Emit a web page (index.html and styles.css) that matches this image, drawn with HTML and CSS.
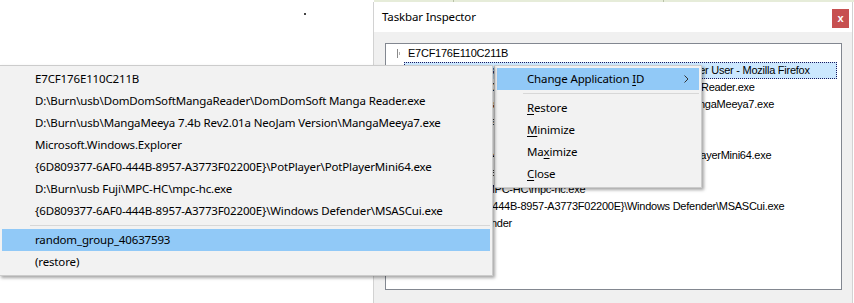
FILE: index.html
```html
<!DOCTYPE html>
<html>
<head>
<meta charset="utf-8">
<title>Taskbar Inspector</title>
<link rel="stylesheet" href="styles.css">
</head>
<body>
<div class="desktop">
  <div class="bgstrip"><span class="bgline l1"></span><span class="bgline l2"></span></div>
  <span class="dot"></span>

  <div class="window">
    <div class="titlebar">
      <span class="title">Taskbar Inspector</span>
      <span class="close">x</span>
    </div>
    <div class="client">
      <div class="tree">
        <div class="row root"><svg class="twig" width="22" height="17" viewBox="0 0 22 17"><line x1="11.5" y1="4" x2="11.5" y2="13" stroke="#8a8a8a" stroke-width="1"/><rect x="13" y="7" width="1" height="3" fill="#b0b0b0"/></svg><span class="label">E7CF176E110C211B</span></div>
        <div class="row child sel"><span class="label">RaMMicHaeL's Blog - 7+ Taskbar Tweaker v5.6 for the Power User - Mozilla Firefox</span></div>
        <div class="row root"><span class="twig-space"></span><span class="label">D:\Burn\usb\DomDomSoftMangaReader\DomDomSoft Manga Reader.exe</span></div>
        <div class="row root"><span class="twig-space"></span><span class="label">D:\Burn\usb\MangaMeeya 7.4b Rev2.01a NeoJam Version\MangaMeeya7.exe</span></div>
        <div class="row root"><span class="twig-space"></span><span class="label">Microsoft.Windows.Explorer</span></div>
        <div class="row child"><span class="label">This PC</span></div>
        <div class="row root"><span class="twig-space"></span><span class="label">{6D809377-6AF0-444B-8957-A3773F02200E}\PotPlayer\PotPlayerMini64.exe</span></div>
        <div class="row child"><span class="label">Daum PotPlayer</span></div>
        <div class="row root"><span class="twig-space"></span><span class="label">D:\Burn\usb Fuji\MPC-HC\mpc-hc.exe</span></div>
        <div class="row root"><span class="twig-space"></span><span class="label">{6D809377-6AF0-444B-8957-A3773F02200E}\Windows Defender\MSASCui.exe</span></div>
        <div class="row child"><span class="label">Windows Defender</span></div>
      </div>
    </div>
  </div>

  <div class="menu ctxmenu">
    <div class="mi hl"><span>Change Application <u>I</u>D</span><svg class="arrow" width="5" height="8" viewBox="0 0 5 8"><path d="M0.5 0.5 L4 4 L0.5 7.5" fill="none" stroke="#333" stroke-width="1"/></svg></div>
    <div class="sep"></div>
    <div class="mi"><span><u>R</u>estore</span></div>
    <div class="mi"><span><u>M</u>inimize</span></div>
    <div class="mi"><span>Ma<u>x</u>imize</span></div>
    <div class="mi"><span><u>C</u>lose</span></div>
  </div>

  <div class="menu idmenu">
    <div class="mi">E7CF176E110C211B</div>
    <div class="mi">D:\Burn\usb\DomDomSoftMangaReader\DomDomSoft Manga Reader.exe</div>
    <div class="mi">D:\Burn\usb\MangaMeeya 7.4b Rev2.01a NeoJam Version\MangaMeeya7.exe</div>
    <div class="mi">Microsoft.Windows.Explorer</div>
    <div class="mi">{6D809377-6AF0-444B-8957-A3773F02200E}\PotPlayer\PotPlayerMini64.exe</div>
    <div class="mi">D:\Burn\usb Fuji\MPC-HC\mpc-hc.exe</div>
    <div class="mi">{6D809377-6AF0-444B-8957-A3773F02200E}\Windows Defender\MSASCui.exe</div>
    <div class="sep"></div>
    <div class="mi hl">random_group_40637593</div>
    <div class="mi">(restore)</div>
  </div>
</div>
</body>
</html>
```

FILE: styles.css
```css
* { box-sizing: border-box; }
html, body { margin: 0; padding: 0; }
body {
  width: 854px;
  height: 303px;
  overflow: hidden;
  background: #ffffff;
  font-family: "Noto Sans", "Segoe UI", sans-serif;
  font-size: 11.5px;
  letter-spacing: -0.15px;
  color: #000;
}
.desktop {
  position: relative;
  width: 854px;
  height: 303px;
  overflow: hidden;
  background: #fff;
}
.bgstrip {
  position: absolute;
  left: 374px;
  top: 0;
  width: 480px;
  height: 2px;
  background: #e6ecd9;
}
.bgline {
  position: absolute;
  top: 0;
  width: 1px;
  height: 2px;
  background: #b9c2a8;
}
.bgline.l1 { left: 79px; }
.bgline.l2 { left: 289px; }
.dot {
  position: absolute;
  left: 304px;
  top: 13px;
  width: 2px;
  height: 2px;
  background: #444;
}

/* window */
.window {
  position: absolute;
  left: 373px;
  top: 2px;
  width: 480px;
  height: 301px;
  background: #f0f0f0;
  border-left: 1px solid #d2d2d2;
  border-right: 1px solid #d2d2d2;
  display: flex;
  flex-direction: column;
}
.titlebar {
  height: 30px;
  flex: none;
  background: #fff;
  display: flex;
  align-items: flex-start;
  justify-content: space-between;
}
.title {
  padding-left: 8px;
  line-height: 30px;
}
.close {
  margin-top: 7px;
  margin-right: 3px;
  width: 17px;
  height: 19px;
  background: #c75050;
  color: #fff;
  font-family: "Liberation Sans", sans-serif;
  font-weight: bold;
  font-size: 11px;
  letter-spacing: 0;
  line-height: 18px;
  text-align: center;
}
.client {
  flex: 1;
  padding: 11px 0 0 11px;
}
.tree {
  width: 457px;
  height: 247px;
  border: 1px solid #828790;
  background: #fff;
  padding-top: 1px;
  overflow: hidden;
  font-family: "Liberation Sans", Arial, sans-serif;
  font-size: 11px;
  letter-spacing: -0.25px;
}
.row {
  height: 17px;
  line-height: 17px;
  white-space: nowrap;
  display: flex;
  align-items: center;
}
.twig, .twig-space {
  width: 22px;
  height: 17px;
  flex: none;
  display: block;
}
.row.child {
  margin-left: 18px;
  width: 433px;
  padding-left: 19px;
}
.row.sel {
  background: #cce8ff;
  border: 1px dotted #1a1a60;
  padding-left: 18px;
}

/* menus */
.menu {
  position: absolute;
  background: #f2f2f2;
  border: 1px solid #cccccc;
  padding: 2px;
  box-shadow: 2px 2px 3px rgba(0, 0, 0, 0.35);
  white-space: nowrap;
}
.mi {
  height: 22px;
  line-height: 22px;
}
.mi.hl { background: #91c9f7; }
.sep {
  height: 7px;
  display: flex;
  align-items: center;
}
.sep::after {
  content: "";
  display: block;
  flex: 1;
  height: 1px;
  background: #d7d7d7;
}
.idmenu {
  left: -1px;
  top: 65px;
  width: 494px;
  z-index: 3;
}
.idmenu .mi { padding-left: 33px; }
.idmenu .sep { padding-left: 28px; }
.ctxmenu {
  left: 494px;
  top: 65px;
  width: 208px;
  z-index: 2;
}
.ctxmenu .mi {
  padding-left: 30px;
  display: flex;
  align-items: center;
  justify-content: space-between;
  padding-right: 10px;
}
.ctxmenu .sep { padding-left: 26px; }
.arrow { display: block; }
u { text-decoration: underline; text-underline-offset: 2px; }
```
